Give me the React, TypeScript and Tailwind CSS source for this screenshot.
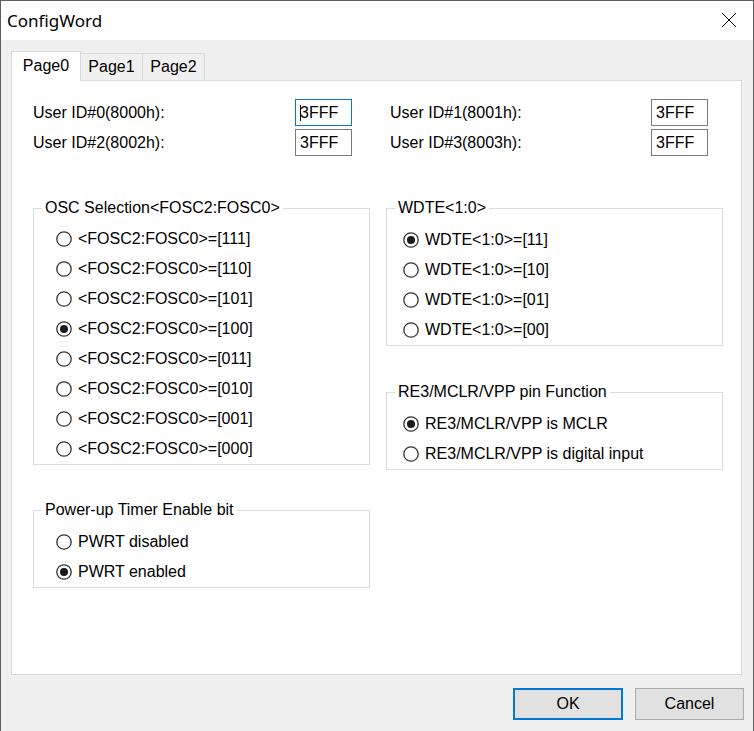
import { ReactNode } from 'react';

const Radio = ({ label, checked }: { label: string; checked?: boolean }) => (
  <label className="flex h-[30px] items-center">
    <svg width="16" height="16" viewBox="0 0 16 16" className="shrink-0">
      <circle cx="8" cy="8" r="7.2" fill="#fff" stroke="#333" strokeWidth="1.3" />
      {checked && <circle cx="8" cy="8" r="4" fill="#1a1a1a" />}
    </svg>
    <span className="ml-[6px]">{label}</span>
  </label>
);

const Group = ({ title, className, inner, children }: { title: string; className?: string; inner: string; children: ReactNode }) => (
  <fieldset className={`w-[337px] border border-[#dcdcdc] ${className ?? ''}`}>
    <legend className="ml-[8px] px-[3px] leading-[18px]">{title}</legend>
    <div className={inner}>{children}</div>
  </fieldset>
);

const IdBox = ({ focused }: { focused?: boolean }) => (
  <div
    className={`flex h-[27px] w-[57px] items-center border bg-white pl-[4px] ${
      focused ? 'border-[#0078d7]' : 'border-[#7a7a7a]'
    }`}
  >
    {focused && <span className="h-[16px] w-px bg-black" />}
    <span className={focused ? '-ml-px' : ''}>3FFF</span>
  </div>
);

const oscValues = ['111', '110', '101', '100', '011', '010', '001', '000'];
const wdteValues = ['11', '10', '01', '00'];

export default function App() {
  return (
    <div className="flex h-[731px] w-[754px] flex-col border-x border-t border-[#5f5f5f] font-['Liberation_Sans',Arial,sans-serif] text-[16px] text-black">
      {/* title bar */}
      <div className="flex h-[39px] items-center justify-between bg-white pl-[6px] pr-[16px]">
        <span className="font-['Noto_Sans',sans-serif] text-[17px]">ConfigWord</span>
        <svg width="16" height="16" viewBox="0 0 16 16" className="mt-[-1px]">
          <path d="M1 1 L15 15 M15 1 L1 15" stroke="#000" strokeWidth="1" />
        </svg>
      </div>

      <div className="flex flex-1 flex-col bg-[#f0f0f0] pt-[11px]">
        {/* tabs */}
        <div className="ml-[10px] flex items-end">
          <div className="relative z-10 -mb-px flex h-[30px] w-[70px] items-center justify-center border-x border-t border-[#d9d9d9] bg-white pb-[2px]">
            Page0
          </div>
          <div className="flex h-[27px] w-[62px] items-center justify-center border-r border-t border-[#d9d9d9]">
            Page1
          </div>
          <div className="flex h-[27px] w-[62px] items-center justify-center border-r border-t border-[#d9d9d9]">
            Page2
          </div>
        </div>

        {/* tab page */}
        <div className="ml-[10px] h-[595px] w-[731px] border border-[#d9d9d9] bg-white pl-[21px] pt-[18px]">
          <div className="flex flex-col gap-[3px]">
            <div className="flex items-center">
              <span className="w-[262px]">User ID#0(8000h):</span>
              <IdBox focused />
              <span className="ml-[38px] w-[261px]">User ID#1(8001h):</span>
              <IdBox />
            </div>
            <div className="flex items-center">
              <span className="w-[262px]">User ID#2(8002h):</span>
              <IdBox />
              <span className="ml-[38px] w-[261px]">User ID#3(8003h):</span>
              <IdBox />
            </div>
          </div>

          <div className="mt-[43px] flex gap-[16px]">
            <div className="flex flex-col">
              <Group title="OSC Selection<FOSC2:FOSC0>" inner="pl-[22px] pt-[7px]">
                {oscValues.map((v) => (
                  <Radio key={v} label={`<FOSC2:FOSC0>=[${v}]`} checked={v === '100'} />
                ))}
              </Group>
              <Group title="Power-up Timer Enable bit" className="mt-[36px]" inner="pl-[22px] pt-[8px]">
                <Radio label="PWRT disabled" />
                <Radio label="PWRT enabled" checked />
              </Group>
            </div>

            <div className="flex flex-col">
              <Group title="WDTE<1:0>" inner="pl-[16px] pt-[8px]">
                {wdteValues.map((v) => (
                  <Radio key={v} label={`WDTE<1:0>=[${v}]`} checked={v === '11'} />
                ))}
              </Group>
              <Group title="RE3/MCLR/VPP pin Function" className="mt-[37px]" inner="pl-[16px] pt-[8px]">
                <Radio label="RE3/MCLR/VPP is MCLR" checked />
                <Radio label="RE3/MCLR/VPP is digital input" />
              </Group>
            </div>
          </div>
        </div>

        {/* buttons */}
        <div className="mt-[13px] flex justify-end gap-[12px] pr-[9px]">
          <button className="h-[32px] w-[110px] border-2 border-[#0078d7] bg-[#e1e1e1]">OK</button>
          <button className="h-[32px] w-[109px] border border-[#adadad] bg-[#e1e1e1]">Cancel</button>
        </div>
      </div>
    </div>
  );
}
